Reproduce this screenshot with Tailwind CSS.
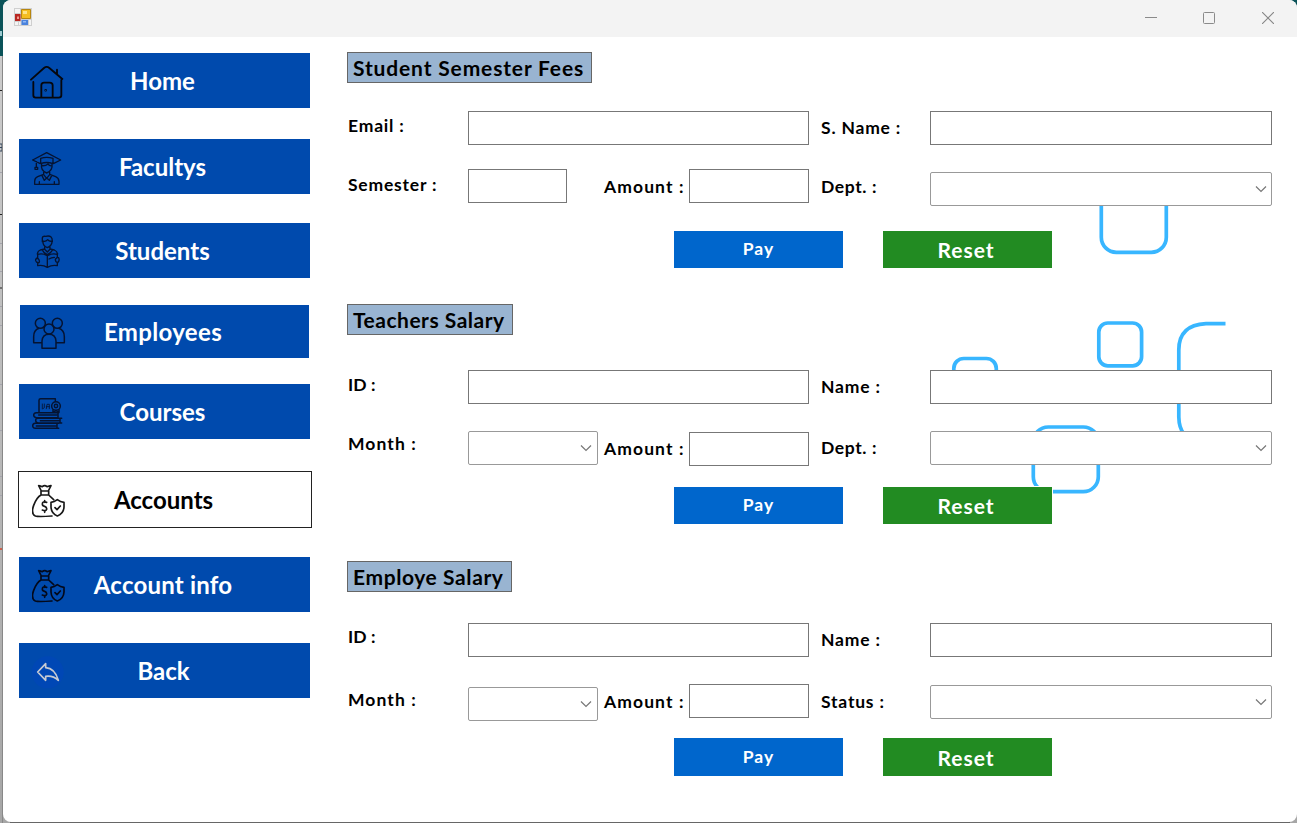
<!DOCTYPE html>
<html lang="en">
<head>
<meta charset="utf-8">
<title>Accounts</title>
<script src="https://cdn.jsdelivr.net/npm/@tailwindcss/browser@4"></script>
</head>
<body class="relative h-[823px] w-[1297px] overflow-hidden bg-linear-to-b from-[#cfcfcf] to-[#a6a6a6] pl-[3px] font-[Lato,sans-serif] font-bold text-black">
<!-- desktop visible behind the window -->
<svg class="absolute left-0 top-0" width="1297" height="823" viewBox="0 0 1297 823">
  <path d="M0 0H1297V14H12V56H0Z" fill="#0b5359"/>
  <path d="M0 33.500H2" stroke="#9cc9d0" stroke-width="5"/>
  <path d="M0 90.500H2M0 214.500H3M0 288H3" stroke="#222" stroke-width="1"/>
  <path d="M0 144H2V151H0M0 147.500H2" stroke="#34465c" fill="none"/>
  <path d="M0 172.500H3M0 243.500H3M0 271.500H3M0 306.500H3M0 325.500H3M0 384.500H3M0 430.500H3M0 476.500H3M0 495.500H3" stroke="#a4a4ac"/>
  <path d="M0 549H3" stroke="#c9614e" stroke-width="2"/>
  <path d="M2.500 56V823" stroke="#888"/>
  <path d="M10 822.500H1290" stroke="#666" stroke-width="2"/>
</svg>

<div class="relative flex h-[822px] w-[1294px] flex-col overflow-hidden rounded-[8px] bg-white">
  <header class="flex h-[37px] shrink-0 items-center justify-between bg-[#f3f3f3] pl-[11px] pr-[23px]">
    <svg class="-mt-[3px]" width="18" height="18" viewBox="0 0 18 18">
      <path d="M0 0H18V18H0Z" fill="#cfcfcf"/>
      <path d="M1 1H6V5H1ZM1 14H4V17H1ZM5 14H6.500V17H5ZM15 12H17V17H15Z" fill="#f4f4f4"/>
      <path d="M1 6H6.500V13H1Z" fill="#b92722"/><path d="M3 8.500H5V11H3Z" fill="#ef9b8e"/>
      <path d="M7.500 1.500H16.500V10.500H7.500Z" fill="#f5bd20" stroke="#b7860f"/><path d="M9 3H13V6H9Z" fill="#ffe384"/>
      <path d="M7.500 12H14V17H7.500Z" fill="#4a83dd"/><path d="M9 13H12V14.500H9Z" fill="#92baf5"/>
    </svg>
    <div class="flex items-center gap-[46px] pb-[2px]">
      <svg width="12" height="12" viewBox="0 0 12 12"><path d="M0 5.500H12" stroke="#8a8a8a"/></svg>
      <svg width="12" height="12" viewBox="0 0 12 12"><rect x=".5" y=".5" width="11" height="11" rx="1" fill="none" stroke="#8a8a8a"/></svg>
      <svg class="ml-px" width="12" height="12" viewBox="0 0 12 12"><path d="M0 0L12 12M12 0L0 12" stroke="#858585" stroke-width="1.100"/></svg>
    </div>
  </header>

  <div class="relative flex flex-1">
    <!-- decorative outlined squares -->
    <svg class="absolute left-0 top-0" width="1294" height="785" viewBox="3 37 1294 785" fill="none" stroke="#38b6ff" stroke-width="3.700">
      <rect x="1101.300" y="187" width="65" height="65.300" rx="15"/>
      <rect x="1098.800" y="323" width="42.800" height="42.800" rx="9"/>
      <rect x="953.800" y="358.500" width="42.500" height="42.500" rx="10"/>
      <rect x="1033.300" y="427" width="65" height="64.700" rx="15"/>
      <path d="M1225.500 323.700H1206Q1178.800 325 1178.800 350V417Q1179 428 1184 434"/>
    </svg>

    <nav class="relative flex w-[309px] shrink-0 flex-col pl-[16px] pt-[16px]">
      <a class="flex h-[55px] w-[291px] items-center bg-[#004aad] pl-[11px]">
        <svg class="mt-[3px]" width="34" height="35" viewBox="90 195 102 105" fill="none" stroke="#05070d" stroke-width="5.500" stroke-linecap="round" stroke-linejoin="round"><path d="M93 239L132 204Q140 197 148 204L187 237M171 222V209M100 246V286Q100 293 107 293H176Q184 293 184 286V240M124 292V256Q124 248 132 248H149Q158 248 158 256V292"/><circle cx="137" cy="271" r="1"/></svg>
        <span class="w-[197px] text-center text-[24px] leading-7 text-white">Home</span>
      </a>
      <a class="mt-[31px] flex h-[55px] w-[291px] items-center bg-[#004aad] pl-[11px]">
        <svg class="mt-1" width="34" height="35" viewBox="90 453 102 105" fill="none" stroke="#051331" stroke-width="4" stroke-linecap="round" stroke-linejoin="round"><path d="M98 480L140 458L182 480L160 491M98 480L121 491M122 491V475Q140 469 159 475V491M122 491Q140 484 159 491M109 485V502M105 502H113V508H105ZM125 491Q121 512 140 519Q159 512 156 491M126 497Q137 498 144 492Q149 499 156 497M131 516V524L140 535L149 524V516M131 523L113 530Q104 534 104 544V553H177V544Q176 534 167 530L149 523M126 527L133 541L140 534L148 541L155 527M118 553V545M163 553V545"/></svg>
        <span class="w-[197px] text-center text-[24px] leading-7 text-white">Facultys</span>
      </a>
      <a class="mt-[29px] flex h-[55px] w-[291px] items-center bg-[#004aad] pl-[11px]">
        <svg class="mt-[2px]" width="34" height="35" viewBox="90 73 102 105" fill="none" stroke="#051331" stroke-width="4" stroke-linecap="round" stroke-linejoin="round"><path d="M127 96V87Q126 78 137 80Q158 75 157 96M128 94Q137 97 143 90Q149 97 157 94M129 96Q128 107 142 114Q156 107 156 96M134 112V119L142 127L150 119V112M134 118L121 121Q113 124 112 133M150 118L163 121Q171 124 173 133M128 122Q130 129 142 135Q154 129 157 122M113 147V134Q129 130 142 138Q156 130 172 134V143M142 138V173M113 158V168Q129 165 142 173Q156 165 172 168V158M113 145Q106 146 107 153Q109 160 117 159Q121 153 113 145M172 143L166 149Q166 158 173 159Q180 153 176 144ZM147 148Q154 144 163 143"/></svg>
        <span class="w-[197px] text-center text-[24px] leading-7 text-white">Students</span>
      </a>
      <a class="ml-px mt-[27px] flex h-[53px] w-[289px] items-center bg-[#004aad] pl-[12px]">
        <svg class="mt-[3px]" width="34" height="35" viewBox="96 318 102 105" fill="none" stroke="#051331" stroke-width="4.500" stroke-linejoin="round"><circle cx="121" cy="340" r="15"/><circle cx="172" cy="340" r="15"/><circle cx="147" cy="357" r="15"/><path d="M126 398H101V380Q101 360 117 355M168 398H193V380Q193 360 176 355M126 415V393Q128 373 147 373Q166 373 168 393V415Z"/></svg>
        <span class="w-[194px] text-center text-[24px] leading-7 tracking-[.35px] text-white">Employees</span>
      </a>
      <a class="mt-[26px] flex h-[55px] w-[291px] items-center bg-[#004aad] pl-[11px]">
        <svg class="mt-1" width="34" height="35" viewBox="90 558 102 105" fill="none" stroke="#051331" stroke-width="4.500" stroke-linecap="round" stroke-linejoin="round"><path d="M117 606V571Q117 566 122 566H166V572M176 608H109Q101 609 101 615Q101 622 109 623H174M116 615H170M174 608V623M185 625H116Q107 624 107 631Q107 639 116 639H185M180 625V639M121 632H176M176 640H106Q98 641 98 648Q99 655 106 655H176M171 640V655M109 648H167M159 599V607L168 602L177 607V599"/><path d="M127 582V596M133 582V593L129 596M139 596L141 583H148V596M139 590H148" stroke-width="2.500"/><circle cx="168" cy="588" r="13"/><circle cx="168" cy="588" r="5"/></svg>
        <span class="w-[197px] text-center text-[24px] leading-7 text-white">Courses</span>
      </a>
      <a class="-ml-px mt-[32px] flex h-[57px] w-[294px] items-center border border-[#222] bg-white pl-[13px]">
        <svg class="mt-[3px]" width="34" height="35" viewBox="96 101 102 105" fill="none" stroke="#181818" stroke-width="5" stroke-linecap="round" stroke-linejoin="round"><path id="bag" d="M124 122L116 106Q122 107 127 109Q134 103 141 109Q147 107 153 106L145 122M123 122H146V134H123ZM123 134Q110 141 101 165Q92 190 106 197Q114 200 156 197M146 134L161 148M172 148Q163 155 153 156V170Q154 190 172 197Q191 190 192 170V156Q181 155 172 148ZM165 172L171 178L181 167M140 156Q127 152 127 161Q127 167 134 168Q141 170 140 177Q138 184 127 179M134 151V156M134 181V186"/></svg>
        <span class="w-[195px] text-center text-[24px] leading-7">Accounts</span>
      </a>
      <a class="mt-[29px] flex h-[55px] w-[291px] items-center bg-[#004aad] pl-[13px]">
        <svg class="mt-[3px]" width="34" height="35" viewBox="96 101 102 105" fill="none" stroke="#03091a" stroke-width="5" stroke-linecap="round" stroke-linejoin="round"><use href="#bag"/></svg>
        <span class="w-[194px] text-center text-[24px] leading-7 tracking-[.2px] text-white">Account info</span>
      </a>
      <a class="mt-[31px] flex h-[55px] w-[291px] items-center bg-[#004aad] pl-[11px]">
        <svg class="mt-1" width="34" height="35" viewBox="90 615 102 105"><circle cx="143" cy="667" r="48" fill="#0047b5"/><path d="M113 666L137 641V653Q165 655 175 691Q159 676 137 679V691Z" fill="none" stroke="#c6cad3" stroke-width="5" stroke-linejoin="round"/></svg>
        <span class="w-[199px] text-center text-[24px] leading-7 text-white">Back</span>
      </a>
    </nav>

    <main class="relative flex flex-col pl-[35px] pt-[15px]">
      <section class="flex h-[251px] flex-col">
        <h2 class="flex h-[31px] w-[245px] items-center whitespace-nowrap border border-[#666] bg-[#99b4d1] pl-[5px] pt-px text-[21px] tracking-[.85px]"><span>Student Semester Fees</span></h2>
        <div class="mt-[28px] flex h-[59px] items-start whitespace-nowrap text-[17.5px] leading-5 tracking-[.8px]">
          <span class="mt-[5px] w-[121px] pl-px"><span>Email :</span></span>
          <input class="h-[34px] w-[341px] border border-[#777] bg-white">
          <span class="mt-[7px] w-[121px] pl-[12px]"><span>S. Name :</span></span>
          <input class="h-[34px] w-[342px] border border-[#777] bg-white">
        </div>
        <div class="flex h-[61px] items-start whitespace-nowrap text-[17.5px] leading-5 tracking-[.8px]">
          <span class="mt-[5px] w-[121px] pl-px"><span>Semester :</span></span>
          <input class="-mt-px h-[34px] w-[99px] border border-[#777] bg-white">
          <span class="mt-[7px] w-[122px] pl-[37px] tracking-[1.1px]"><span>Amount :</span></span>
          <input class="-mt-px h-[34px] w-[120px] border border-[#777] bg-white">
          <span class="mt-[7px] w-[121px] pl-[12px] tracking-[.6px]"><span>Dept. :</span></span>
          <div class="mt-[2px] flex h-[34px] w-[342px] items-center justify-end rounded-[2px] border border-[#999] bg-white pr-[4px]"><svg width="12" height="8" viewBox="0 0 12 8"><path d="M1 1.500L6 6.500L11 1.500" fill="none" stroke="#777" stroke-width="1.200"/></svg></div>
        </div>
        <div class="flex gap-[40px] pl-[327px] text-white">
          <button class="h-[37px] w-[169px] bg-[#0066cc] text-[17.5px] tracking-[1.1px] outline outline-white"><span>Pay</span></button>
          <button class="h-[37px] w-[169px] bg-[#228b22] pr-[3px] pt-px text-[21px] tracking-[1px] outline outline-white"><span>Reset</span></button>
        </div>
      </section>

      <section class="flex h-[258px] flex-col pt-[1px]">
        <h2 class="flex h-[31px] w-[166px] items-center whitespace-nowrap border border-[#666] bg-[#99b4d1] pl-[5px] text-[21px] tracking-[.5px]"><span>Teachers Salary</span></h2>
        <div class="mt-[35px] flex h-[61px] items-start whitespace-nowrap text-[17.5px] leading-5 tracking-[.8px]">
          <span class="mt-[5px] w-[121px] pl-px tracking-[.1px]"><span>ID :</span></span>
          <input class="h-[34px] w-[341px] border border-[#777] bg-white">
          <span class="mt-[7px] w-[121px] pl-[12px]"><span>Name :</span></span>
          <input class="h-[34px] w-[342px] border border-[#777] bg-white">
        </div>
        <div class="flex h-[56px] items-start whitespace-nowrap text-[17.5px] leading-5 tracking-[.8px]">
          <span class="mt-[3px] w-[121px] pl-px tracking-[1.1px]"><span>Month :</span></span>
          <div class="flex h-[34px] w-[130px] items-center justify-end rounded-[2px] border border-[#999] bg-white pr-[5px]"><svg width="12" height="8" viewBox="0 0 12 8"><path d="M1 1.500L6 6.500L11 1.500" fill="none" stroke="#777" stroke-width="1.200"/></svg></div>
          <span class="mt-[8px] w-[91px] pl-[6px] tracking-[1.1px]"><span>Amount :</span></span>
          <input class="mt-px h-[34px] w-[120px] border border-[#777] bg-white">
          <span class="mt-[7px] w-[121px] pl-[12px] tracking-[.6px]"><span>Dept. :</span></span>
          <div class="flex h-[34px] w-[342px] items-center justify-end rounded-[2px] border border-[#999] bg-white pr-[4px]"><svg width="12" height="8" viewBox="0 0 12 8"><path d="M1 1.500L6 6.500L11 1.500" fill="none" stroke="#777" stroke-width="1.200"/></svg></div>
        </div>
        <div class="flex gap-[40px] pl-[327px] text-white">
          <button class="h-[37px] w-[169px] bg-[#0066cc] text-[17.5px] tracking-[1.1px] outline outline-white"><span>Pay</span></button>
          <button class="h-[37px] w-[169px] bg-[#228b22] pr-[3px] pt-px text-[21px] tracking-[1px] outline outline-white"><span>Reset</span></button>
        </div>
      </section>

      <section class="flex flex-col">
        <h2 class="flex h-[31px] w-[165px] items-center whitespace-nowrap border border-[#666] bg-[#99b4d1] pl-[5px] pt-px text-[21px] tracking-[.6px]"><span>Employe Salary</span></h2>
        <div class="mt-[31px] flex h-[61px] items-start whitespace-nowrap text-[17.5px] leading-5 tracking-[.8px]">
          <span class="mt-[4px] w-[121px] pl-px tracking-[.1px]"><span>ID :</span></span>
          <input class="h-[34px] w-[341px] border border-[#777] bg-white">
          <span class="mt-[7px] w-[121px] pl-[12px]"><span>Name :</span></span>
          <input class="h-[34px] w-[342px] border border-[#777] bg-white">
        </div>
        <div class="flex h-[54px] items-start whitespace-nowrap text-[17.5px] leading-5 tracking-[.8px]">
          <span class="mt-[6px] w-[121px] pl-px tracking-[1.1px]"><span>Month :</span></span>
          <div class="mt-[3px] flex h-[34px] w-[130px] items-center justify-end rounded-[2px] border border-[#999] bg-white pr-[5px]"><svg width="12" height="8" viewBox="0 0 12 8"><path d="M1 1.500L6 6.500L11 1.500" fill="none" stroke="#777" stroke-width="1.200"/></svg></div>
          <span class="mt-[8px] w-[91px] pl-[6px] tracking-[1.1px]"><span>Amount :</span></span>
          <input class="h-[34px] w-[120px] border border-[#777] bg-white">
          <span class="mt-[8px] w-[121px] pl-[12px]"><span>Status :</span></span>
          <div class="mt-px flex h-[34px] w-[342px] items-center justify-end rounded-[2px] border border-[#999] bg-white pr-[4px]"><svg width="12" height="8" viewBox="0 0 12 8"><path d="M1 1.500L6 6.500L11 1.500" fill="none" stroke="#777" stroke-width="1.200"/></svg></div>
        </div>
        <div class="flex gap-[40px] pl-[327px] text-white">
          <button class="h-[38px] w-[169px] bg-[#0066cc] text-[17.5px] tracking-[1.1px] outline outline-white"><span>Pay</span></button>
          <button class="h-[38px] w-[169px] bg-[#228b22] pr-[3px] pt-px text-[21px] tracking-[1px] outline outline-white"><span>Reset</span></button>
        </div>
      </section>
    </main>
  </div>
</div>
</body>
</html>
